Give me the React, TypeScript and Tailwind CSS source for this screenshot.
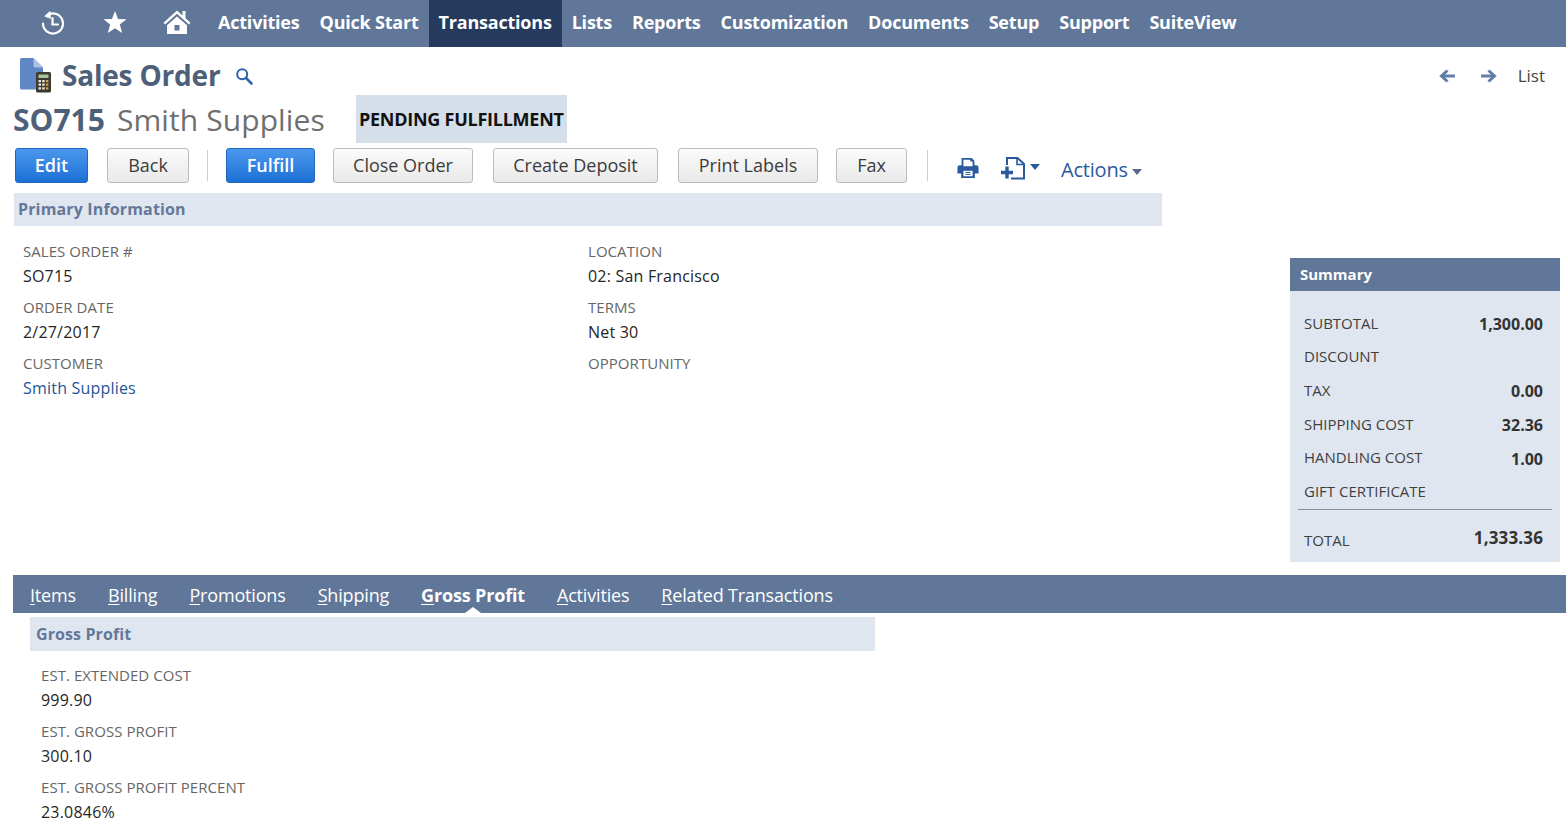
const navItems = ['Activities', 'Quick Start', 'Transactions', 'Lists', 'Reports', 'Customization', 'Documents', 'Setup', 'Support', 'SuiteView'];

const tabs = [
  { key: 'I', rest: 'tems' },
  { key: 'B', rest: 'illing' },
  { key: 'P', rest: 'romotions' },
  { key: 'S', rest: 'hipping' },
  { key: 'G', rest: 'ross Profit', active: true },
  { key: 'A', rest: 'ctivities' },
  { key: 'R', rest: 'elated Transactions' },
];

const summaryRows = [
  { label: 'SUBTOTAL', value: '1,300.00' },
  { label: 'DISCOUNT', value: '' },
  { label: 'TAX', value: '0.00' },
  { label: 'SHIPPING COST', value: '32.36' },
  { label: 'HANDLING COST', value: '1.00' },
  { label: 'GIFT CERTIFICATE', value: '' },
];

function HistoryIcon() {
  return (
    <svg width="26" height="26" viewBox="0 0 26 26" fill="none" stroke="white" strokeWidth="2.2" strokeLinecap="round">
      <path d="M7 5.5A10 10 0 1 1 3 13.5" />
      <path d="M5 6 L10 1.5 L10.5 8 Z" fill="white" strokeWidth="0.8" />
      <path d="M12.5 8 V14.5 H18" />
    </svg>
  );
}

function StarIcon() {
  return (
    <svg width="24" height="24" viewBox="0 0 24 24" fill="white">
      <path d="M12 1 L15 9 L23.5 9.3 L16.8 14.5 L19.2 23 L12 18.2 L4.8 23 L7.2 14.5 L0.5 9.3 L9 9 Z" />
    </svg>
  );
}

function HomeIcon() {
  return (
    <svg width="28" height="26" viewBox="0 0 28 26" fill="white">
      <path d="M14 1.5 L19.5 6.5 V2 H22.5 V9.2 L27.5 13.8 L26 15.5 L14 4.8 L2 15.5 L0.5 13.8 Z" />
      <path fillRule="evenodd" d="M14 7.5 L24 16.3 V25 H4 V16.3 Z M11.5 16 V21.5 H16.5 V16 Z" />
    </svg>
  );
}

function RecordIcon() {
  return (
    <svg width="34" height="36" viewBox="0 0 34 36">
      <path d="M2 2.5 Q2 1 3.5 1 H15.5 L25 10.5 V31 Q25 32.5 23.5 32.5 H3.5 Q2 32.5 2 31 Z" fill="#5f87c5" />
      <path d="M15.5 1 L25 10.5 H17 Q15.5 10.5 15.5 9 Z" fill="#aac2e3" />
      <rect x="18" y="15" width="15" height="20.5" rx="1.5" fill="#3d3a33" />
      <rect x="20.5" y="17.5" width="10" height="3.5" fill="#a9c29a" />
      <path d="M20.5 23 h2.5 v2.2 h-2.5 z M24.2 23 h2.5 v2.2 h-2.5 z M20.5 26.6 h2.5 v2.2 h-2.5 z M24.2 26.6 h2.5 v2.2 h-2.5 z M20.5 30.2 h2.5 v2.2 h-2.5 z M24.2 30.2 h2.5 v2.2 h-2.5 z" fill="#e8e6dd" />
      <path d="M27.9 23 h2.5 v2.2 h-2.5 z M27.9 26.6 h2.5 v2.2 h-2.5 z M27.9 30.2 h2.5 v2.2 h-2.5 z" fill="#d9a24a" />
    </svg>
  );
}

function SearchIcon() {
  return (
    <svg width="18" height="18" viewBox="0 0 18 18" fill="none" stroke="#2f62a8" strokeWidth="2">
      <circle cx="7.2" cy="7.2" r="5" />
      <path d="M11 11 L16.5 16.5" strokeWidth="2.6" strokeLinecap="round" />
    </svg>
  );
}

function ArrowIcon({ flip }: { flip?: boolean }) {
  return (
    <svg width="17" height="14" viewBox="0 0 17 14" fill="none" stroke="#607da6" strokeWidth="3" className={flip ? 'rotate-180' : ''}>
      <path d="M16 7 H3" />
      <path d="M8.5 1.5 L2.5 7 L8.5 12.5" />
    </svg>
  );
}

function PrintIcon() {
  return (
    <svg width="22" height="24" viewBox="0 0 24 24">
      <path fillRule="evenodd" d="M5 1 H16 L19 4 V9 H21 Q23.5 9 23.5 11.5 V18 H19.5 V23 H4.5 V18 H0.5 V11.5 Q0.5 9 3 9 H5 Z M7 3 V10 H17 V5 H14.5 V3 Z M7 15 V21 H17 V15 Z" fill="#2a5a9e" />
      <path d="M9 16.8 h6 M9 19 h6" stroke="#2a5a9e" strokeWidth="1" />
    </svg>
  );
}

function NewDocIcon() {
  return (
    <svg width="27" height="24" viewBox="0 0 27 24" fill="none" stroke="#2a5a9e">
      <path d="M7 9 V2 H17.5 L24 8 V22.5 H11" strokeWidth="2" />
      <path d="M17 2 V8.5 H24" strokeWidth="1.6" />
      <path d="M7 10.5 V22.5 M1 16.5 H13" strokeWidth="3.4" />
    </svg>
  );
}

function Caret({ color, size }: { color: string; size: number }) {
  return (
    <svg width={size} height={size * 0.6} viewBox="0 0 10 6" fill={color}>
      <path d="M0 0 H10 L5 6 Z" />
    </svg>
  );
}

function Button({ label, primary, className }: { label: string; primary?: boolean; className: string }) {
  return (
    <div
      className={
        'flex h-[35px] shrink-0 items-center justify-center rounded-[3px] border text-[18px] ' +
        (primary
          ? 'border-[#1f69bd] bg-gradient-to-b from-[#4a97ec] to-[#1b70d6] font-semibold text-white '
          : 'border-[#bcbcbc] bg-gradient-to-b from-[#fbfbfb] to-[#e9e9e9] text-[#3c3c3c] ') +
        className
      }
    >
      {label}
    </div>
  );
}

function Field({ label, value, link }: { label: string; value?: string; link?: boolean }) {
  return (
    <div className="h-[56px]">
      <div className="text-[15px] leading-[23px] tracking-[0.05px] text-[#666666]">{label}</div>
      {value && <div className={'mt-[0.5px] text-[16px] leading-[24px] tracking-[0.2px] ' + (link ? 'text-[#255599]' : 'text-[#262626]')}>{value}</div>}
    </div>
  );
}

export default function App() {
  return (
    <div className="h-[832px] w-[1566px] overflow-hidden bg-white font-['Open_Sans',sans-serif]">
      <nav className="flex h-[47px] items-stretch bg-[#607799]">
        <div className="ml-[40px] flex w-[26px] items-center pb-[2px]"><HistoryIcon /></div>
        <div className="ml-[37px] flex w-[24px] items-center pb-[3px]"><StarIcon /></div>
        <div className="ml-[36px] flex w-[28px] items-center pb-[3px]"><HomeIcon /></div>
        <div className="ml-[17px] flex">
          {navItems.map((item) => (
            <div
              key={item}
              className={'flex items-center px-[10px] pb-[2px] text-[18px] font-bold tracking-[-0.21px] text-white ' + (item === 'Transactions' ? 'bg-[#253a5c]' : '')}
            >
              {item}
            </div>
          ))}
        </div>
      </nav>

      <div className="flex h-[48px] items-center pl-[18px] pr-[21px] pt-[8px]">
        <RecordIcon />
        <h1 className="ml-[10px] text-[28px] font-bold tracking-[-0.2px] text-[#4d5f79]">Sales Order</h1>
        <div className="ml-[15px] mt-[2px]"><SearchIcon /></div>
        <div className="ml-auto flex items-center pt-[2px]">
          <ArrowIcon />
          <div className="ml-[24px]"><ArrowIcon flip /></div>
          <span className="ml-[21px] text-[17px] text-[#444444]">List</span>
        </div>
      </div>

      <div className="flex h-[48px] items-center pl-[13px]">
        <span className="text-[30px] font-bold text-[#4d5f79]">SO715</span>
        <span className="ml-[12px] text-[30px] tracking-[0.1px] text-[#6f6f6f]">Smith Supplies</span>
        <div className="ml-[31px] flex h-[48px] w-[211px] items-center justify-center bg-[#d5dfe9] text-[18px] font-bold tracking-[-0.25px] text-[#111111]">
          PENDING FULFILLMENT
        </div>
      </div>

      <div className="mt-[5px] flex h-[35px] items-center pl-[15px]">
        <Button label="Edit" primary className="w-[73px]" />
        <Button label="Back" className="ml-[19px] w-[82px]" />
        <div className="ml-[18px] h-[31px] w-px bg-[#cccccc]" />
        <Button label="Fulfill" primary className="ml-[18px] w-[89px]" />
        <Button label="Close Order" className="ml-[18px] w-[140px]" />
        <Button label="Create Deposit" className="ml-[20px] w-[165px]" />
        <Button label="Print Labels" className="ml-[20px] w-[140px]" />
        <Button label="Fax" className="ml-[18px] w-[71px]" />
        <div className="ml-[20px] h-[31px] w-px bg-[#cccccc]" />
        <div className="ml-[29px] mt-[4px]"><PrintIcon /></div>
        <div className="ml-[21px] mt-[4px]"><NewDocIcon /></div>
        <div className="ml-[3px] mt-[2px]"><Caret color="#2a5a9e" size={10} /></div>
        <span className="ml-[21px] mt-[9px] text-[20px] tracking-[-0.2px] text-[#2a5a9e]">Actions</span>
        <div className="ml-[4px] mt-[12px]"><Caret color="#56698a" size={10} /></div>
      </div>

      <div className="mt-[10px] flex h-[382px] items-start">
        <div className="ml-[14px] w-[1148px]">
          <div className="flex h-[33px] items-center bg-[#e0e6ef] pb-[2px] pl-[4px] text-[16px] font-bold tracking-[0.15px] text-[#64789a]">Primary Information</div>
          <div className="mt-[14px] flex pl-[9px]">
            <div className="w-[565px]">
              <Field label="SALES ORDER #" value="SO715" />
              <Field label="ORDER DATE" value="2/27/2017" />
              <Field label="CUSTOMER" value="Smith Supplies" link />
            </div>
            <div>
              <Field label="LOCATION" value="02: San Francisco" />
              <Field label="TERMS" value="Net 30" />
              <Field label="OPPORTUNITY" />
            </div>
          </div>
        </div>

        <aside className="ml-[128px] mt-[65px] h-[304px] w-[270px] bg-[#e0e6ef]">
          <div className="flex h-[33px] items-center bg-[#607799] pl-[10px] text-[15px] font-bold text-white">Summary</div>
          <div className="px-[8px] pt-[16px]">
            {summaryRows.map((row) => (
              <div key={row.label} className="flex h-[33.7px] items-center justify-between pl-[6px] pr-[9px]">
                <span className="mt-[-2px] text-[15px] text-[#3f3f3f]">{row.label}</span>
                <span className="text-[16px] font-bold text-[#333333]">{row.value}</span>
              </div>
            ))}
            <div className="h-px bg-[#8a8f96]" />
            <div className="mt-[14px] flex items-center justify-between pl-[6px] pr-[9px]">
              <span className="mt-[5px] text-[15px] text-[#3f3f3f]">TOTAL</span>
              <span className="text-[17px] font-bold tracking-[0.15px] text-[#333333]">1,333.36</span>
            </div>
          </div>
        </aside>
      </div>

      <div className="ml-[13px] flex h-[38px] gap-[32px] bg-[#607799] pl-[17px] pt-[7px]">
        {tabs.map((tab) => (
          <div key={tab.key} className={'relative h-[31px] text-[18px] leading-[26px] tracking-[-0.17px] text-white ' + (tab.active ? 'font-bold' : '')}>
            <span className="underline underline-offset-2">{tab.key}</span>
            {tab.rest}
            {tab.active && <div className="absolute bottom-0 left-1/2 h-0 w-0 -translate-x-1/2 border-x-[8px] border-b-[6px] border-x-transparent border-b-white" />}
          </div>
        ))}
      </div>

      <div className="ml-[30px] mt-[4px] w-[845px]">
        <div className="flex h-[34px] items-center bg-[#e0e6ef] pb-[1px] pl-[6px] text-[16px] font-bold tracking-[0.1px] text-[#64789a]">Gross Profit</div>
        <div className="mt-[13px] pl-[11px]">
          <Field label="EST. EXTENDED COST" value="999.90" />
          <Field label="EST. GROSS PROFIT" value="300.10" />
          <Field label="EST. GROSS PROFIT PERCENT" value="23.0846%" />
        </div>
      </div>
    </div>
  );
}
